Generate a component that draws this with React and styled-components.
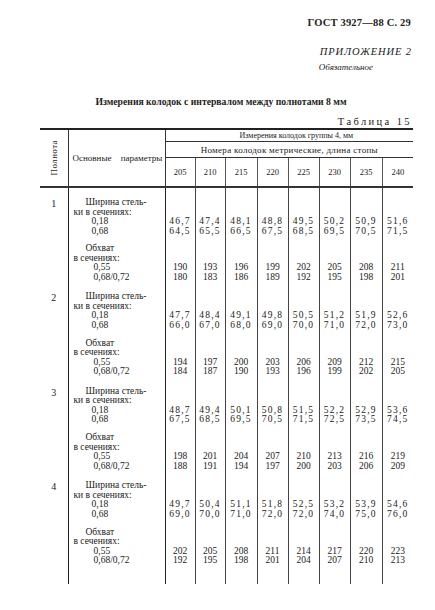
import React from "react";
import styled, { createGlobalStyle } from "styled-components";

const Global = createGlobalStyle`
  html, body {
    margin: 0;
    padding: 0;
    background: #ffffff;
  }
  body {
    font-family: "Liberation Serif", "DejaVu Serif", serif;
    color: #222;
  }
`;

const Page = styled.div`
  width: 435px;
  height: 610px;
  box-sizing: border-box;
  padding: 17px 22px 0 40px;
  background: #fff;
  overflow: hidden;
`;

const RightLine = styled.div`
  text-align: right;
  font-size: 10.5px;
  line-height: 12px;
  font-weight: bold;
  letter-spacing: 0.2px;
  margin-right: 2px;
`;

const Appendix = styled.div`
  display: flex;
  justify-content: flex-end;
  margin-top: 17px;
`;

const AppendixBlock = styled.div`
  display: flex;
  flex-direction: column;
  font-style: italic;
`;

const AppendixTitle = styled.span`
  font-size: 10.5px;
  line-height: 12px;
  letter-spacing: 0.9px;
  margin-right: 1px;
`;

const AppendixNote = styled.span`
  font-size: 9px;
  line-height: 12px;
  margin-top: 3px;
  margin-left: -1px;
`;

const Title = styled.div`
  margin-top: 23px;
  padding-right: 11px;
  text-align: center;
  font-size: 9.7px;
  line-height: 12px;
  font-weight: bold;
`;

const TableNo = styled.div`
  margin-top: 8px;
  text-align: right;
  font-size: 10.5px;
  line-height: 12px;
  letter-spacing: 2.4px;
  margin-right: 1px;
`;

const Table = styled.table`
  width: 373px;
  table-layout: fixed;
  border-collapse: collapse;
  border-top: 2px solid #222;
  margin-top: 0;
`;

const HeadCell = styled.th`
  font-weight: normal;
  padding: 0;
  height: ${(p) => p.$h || 0}px;
  font-size: ${(p) => p.$size || 9}px;
  text-align: ${(p) => p.$align || "center"};
  vertical-align: middle;
  border-right: ${(p) => (p.$right ? "1px solid #333" : "none")};
  border-bottom: ${(p) => (p.$bottom ? `${p.$bottom}px solid #333` : "none")};
  border-left: ${(p) => (p.$left ? "1px solid #555" : "none")};
  white-space: nowrap;
  letter-spacing: ${(p) => p.$ls || 0}px;
  word-spacing: ${(p) => p.$ws || 0}px;
  padding-left: ${(p) => p.$pl || 0}px;
  line-height: 10px;
`;

const Rotated = styled.div`
  writing-mode: vertical-rl;
  transform: rotate(180deg);
  margin: 0 auto;
  font-size: 9px;
  letter-spacing: 0.4px;
`;

const BodyRow = styled.tr`
  & > td {
    padding: 10px 0 ${(p) => (p.$last ? 18 : 0)}px;
    vertical-align: top;
  }
`;

const NumCell = styled.td`
  text-align: center;
  font-size: 10px;
`;

const ParamCell = styled.td`
  border-left: 1px solid #222;
  border-right: 1px solid #222;
  font-size: 9.5px;
  letter-spacing: 0.3px;
`;

const ValueCell = styled.td`
  border-right: ${(p) => (p.$last ? "none" : "1px solid #444")};
  text-align: center;
  font-size: 9.5px;
`;

const Group = styled.div`
  & + & {
    margin-top: 8.4px;
  }
`;

const Line = styled.div`
  height: 9.5px;
  line-height: 9.5px;
  white-space: nowrap;
  padding-left: ${(p) => p.$indent || 0}px;
  letter-spacing: ${(p) => (p.$spaced ? 1.2 : 0)}px;
`;

const sizes = [205, 210, 215, 220, 225, 230, 235, 240];

const rows = [
  {
    n: 1,
    w18: ["46,7", "47,4", "48,1", "48,8", "49,5", "50,2", "50,9", "51,6"],
    w68: ["64,5", "65,5", "66,5", "67,5", "68,5", "69,5", "70,5", "71,5"],
    g55: ["190", "193", "196", "199", "202", "205", "208", "211"],
    g68: ["180", "183", "186", "189", "192", "195", "198", "201"],
  },
  {
    n: 2,
    w18: ["47,7", "48,4", "49,1", "49,8", "50,5", "51,2", "51,9", "52,6"],
    w68: ["66,0", "67,0", "68,0", "69,0", "70,0", "71,0", "72,0", "73,0"],
    g55: ["194", "197", "200", "203", "206", "209", "212", "215"],
    g68: ["184", "187", "190", "193", "196", "199", "202", "205"],
  },
  {
    n: 3,
    w18: ["48,7", "49,4", "50,1", "50,8", "51,5", "52,2", "52,9", "53,6"],
    w68: ["67,5", "68,5", "69,5", "70,5", "71,5", "72,5", "73,5", "74,5"],
    g55: ["198", "201", "204", "207", "210", "213", "216", "219"],
    g68: ["188", "191", "194", "197", "200", "203", "206", "209"],
  },
  {
    n: 4,
    w18: ["49,7", "50,4", "51,1", "51,8", "52,5", "53,2", "53,9", "54,6"],
    w68: ["69,0", "70,0", "71,0", "72,0", "72,0", "74,0", "75,0", "76,0"],
    g55: ["202", "205", "208", "211", "214", "217", "220", "223"],
    g68: ["192", "195", "198", "201", "204", "207", "210", "213"],
  },
];

const colWidths = [28, 97, 30, 30, 32, 31, 31, 31, 32, 31];

function Params() {
  return (
    <>
      <Group>
        <Line $indent={17}>Ширина стель-</Line>
        <Line $indent={5}>ки в сечениях:</Line>
        <Line $indent={23}>0,18</Line>
        <Line $indent={23}>0,68</Line>
      </Group>
      <Group>
        <Line $indent={17}>Обхват</Line>
        <Line $indent={5}>в сечениях:</Line>
        <Line $indent={25}>0,55</Line>
        <Line $indent={25}>0,68/0,72</Line>
      </Group>
    </>
  );
}

function Values({ a, b, c, d }) {
  return (
    <>
      <Group>
        <Line />
        <Line />
        <Line $spaced>{a}</Line>
        <Line $spaced>{b}</Line>
      </Group>
      <Group>
        <Line />
        <Line />
        <Line>{c}</Line>
        <Line>{d}</Line>
      </Group>
    </>
  );
}

export default function App() {
  return (
    <Page>
      <Global />
      <RightLine>ГОСТ 3927—88 С. 29</RightLine>
      <Appendix>
        <AppendixBlock>
          <AppendixTitle>ПРИЛОЖЕНИЕ 2</AppendixTitle>
          <AppendixNote>Обязательное</AppendixNote>
        </AppendixBlock>
      </Appendix>
      <Title>Измерения колодок с интервалом между полнотами 8 мм</Title>
      <TableNo>Таблица 15</TableNo>
      <Table>
        <colgroup>
          {colWidths.map((w, i) => (
            <col key={i} style={{ width: w }} />
          ))}
        </colgroup>
        <thead>
          <tr>
            <HeadCell rowSpan={3} $right $bottom={2}>
              <Rotated>Полнота</Rotated>
            </HeadCell>
            <HeadCell rowSpan={3} $right $bottom={2} $align="left" $pl={4} $size={9} $ws={7}>
              Основные параметры
            </HeadCell>
            <HeadCell colSpan={8} $h={11} $bottom={1} $size={8} $pl={14}>
              Измерения колодок группы 4, мм
            </HeadCell>
          </tr>
          <tr>
            <HeadCell colSpan={8} $h={15} $bottom={1} $size={9} $ls={0.3}>
              Номера колодок метрические, длина стопы
            </HeadCell>
          </tr>
          <tr>
            {sizes.map((s, i) => (
              <HeadCell key={s} $h={28} $bottom={2} $left={i > 0} $size={8.5}>
                {s}
              </HeadCell>
            ))}
          </tr>
        </thead>
        <tbody>
          {rows.map((r, ri) => (
            <BodyRow key={r.n} $last={ri === rows.length - 1}>
              <NumCell>{r.n}</NumCell>
              <ParamCell>
                <Params />
              </ParamCell>
              {sizes.map((s, i) => (
                <ValueCell key={s} $last={i === sizes.length - 1}>
                  <Values a={r.w18[i]} b={r.w68[i]} c={r.g55[i]} d={r.g68[i]} />
                </ValueCell>
              ))}
            </BodyRow>
          ))}
        </tbody>
      </Table>
    </Page>
  );
}
